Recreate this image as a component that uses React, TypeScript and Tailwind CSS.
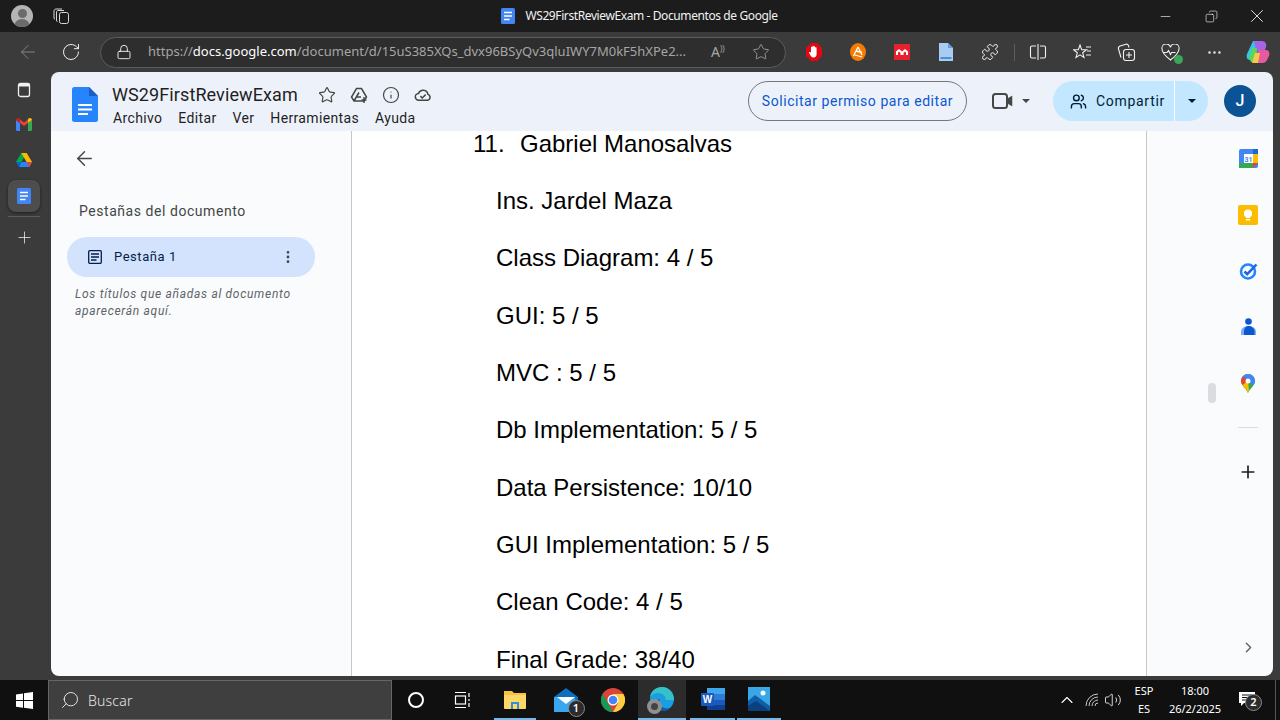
import React from 'react';
import { ArrowLeft, RotateCw, Lock, Star, Info, MoreVertical, ChevronRight, ChevronUp, Plus, Minus, X, Users, Search, Volume2, MoreHorizontal, Copy, Puzzle } from 'lucide-react';

const uiFont = "font-['Noto_Sans','Open_Sans',sans-serif]";

const lines = [
  'Ins. Jardel Maza',
  'Class Diagram: 4 / 5',
  'GUI: 5 / 5',
  'MVC : 5 / 5',
  'Db Implementation: 5 / 5',
  'Data Persistence: 10/10',
  'GUI Implementation: 5 / 5',
  'Clean Code: 4 / 5',
  'Final Grade: 38/40',
];

function DocsIcon({ size = 16 }: { size?: number }) {
  return (
    <svg width={size} height={size} viewBox="0 0 16 16">
      <rect x="1" y="0" width="14" height="16" rx="1.5" fill="#4285f4" />
      <path d="M4 4.5h8M4 8h8M4 11.5h5.5" stroke="#fff" strokeWidth="1.6" />
    </svg>
  );
}

function DocsLogo() {
  return (
    <svg width="26" height="35" viewBox="0 0 26 35">
      <path d="M2.5 0H17l9 9v23.5a2.500 2.500 0 0 1-2.500 2.500h-21A2.500 2.500 0 0 1 0 32.500v-30A2.500 2.500 0 0 1 2.500 0z" fill="#2684fc" />
      <path d="M17 0l9 9h-9z" fill="#1a5fc8" />
      <path d="M6 18h14M6 22.500h14M6 27h10" stroke="#fff" strokeWidth="2" />
    </svg>
  );
}

function Gmail() {
  return (
    <svg width="16" height="13" viewBox="0 0 16 13">
      <path d="M0 2v9.500A1.500 1.500 0 0 0 1.500 13H4V5z" fill="#4285f4" />
      <path d="M16 2v9.500a1.500 1.500 0 0 1-1.500 1.500H12V5z" fill="#34a853" />
      <path d="M4 5v-3.500L8 4.500l4-3V5L8 8z" fill="#ea4335" />
      <path d="M0 2c0-1.800 2.200-2.600 3.500-1.500L4 1v4L0 2z" fill="#c5221f" />
      <path d="M16 2c0-1.800-2.200-2.600-3.500-1.500L12 1v4l4-3z" fill="#fbbc04" />
    </svg>
  );
}

function Drive() {
  return (
    <svg width="16" height="14" viewBox="0 0 16 14">
      <path d="M5.300 0h5.400l-5.300 9H0z" fill="#00ac47" />
      <path d="M5.300 0h5.400L16 9h-5.400z" fill="#ffba00" />
      <path d="M3 14l2.400-5H16l-2.600 5z" fill="#2684fc" />
      <path d="M0 9h5.400L3 14z" fill="#0066da" />
      <path d="M10.600 9H16l-2.600 5z" fill="#ea4335" />
    </svg>
  );
}

function Calendar() {
  return (
    <svg width="19" height="19" viewBox="0 0 19 19">
      <rect width="19" height="19" rx="2" fill="#4285f4" />
      <rect x="14" y="0" width="5" height="5" fill="#1967d2" />
      <rect x="14" y="5" width="5" height="9" fill="#fbbc04" />
      <rect x="0" y="14" width="14" height="5" fill="#34a853" />
      <path d="M14 14h5l-5 5z" fill="#ea4335" />
      <rect x="5" y="5" width="9" height="9" fill="#fff" />
      <text x="9.500" y="12.500" textAnchor="middle" fontSize="7" fontWeight="700" fill="#4285f4" fontFamily="Roboto, sans-serif">31</text>
    </svg>
  );
}

function Keep() {
  return (
    <svg width="20" height="20" viewBox="0 0 20 20">
      <rect width="20" height="20" rx="2" fill="#fbbc04" />
      <circle cx="10" cy="8.500" r="4" fill="#fff" />
      <rect x="8" y="11" width="4" height="2" fill="#fff" />
      <rect x="8" y="14" width="4" height="1.500" fill="#fff" />
    </svg>
  );
}

function Tasks() {
  return (
    <svg width="19" height="18" viewBox="0 0 19 18">
      <circle cx="9" cy="9.500" r="7" fill="none" stroke="#2684fc" strokeWidth="2.600" />
      <path d="M5.500 9.500l2.700 2.700L17.500 2.500" fill="none" stroke="#1a66e0" strokeWidth="2.500" />
    </svg>
  );
}

function Contacts() {
  return (
    <svg width="15" height="17" viewBox="0 0 15 17">
      <circle cx="7.500" cy="3.500" r="3.300" fill="#0b57d0" />
      <path d="M0 14c0-3.500 3-6 7.500-6s7.500 2.500 7.500 6v3H0z" fill="#7baaf7" />
      <path d="M3 17v-4c0-3 2-5 4.500-5s6 2 6 5v4z" fill="#0b57d0" />
    </svg>
  );
}

function Maps() {
  return (
    <svg width="14" height="19" viewBox="0 0 14 19">
      <path d="M7 19C5.800 15.500 0 11.500 0 7a7 7 0 0 1 14 0c0 4.500-5.800 8.500-7 12z" fill="#34a853" />
      <path d="M2 2a7 7 0 0 0-2 5c0 1.500.6 2.800 1.500 4L7 7z" fill="#ea4335" />
      <path d="M2 2a7 7 0 0 1 5-2 7 7 0 0 1 5 2L7 7z" fill="#4285f4" />
      <path d="M12 2a7 7 0 0 1 2 5c0 1.500-.6 2.800-1.500 4L7 7z" fill="#4285f4" />
      <path d="M1.500 11C3 13.500 6 16 7 19l1-2.500L7 7z" fill="#fbbc04" />
      <circle cx="7" cy="7" r="2.500" fill="#fff" />
    </svg>
  );
}

function ExtensionIcons() {
  return (
    <>
      <Slot>
        <svg width="16" height="18" viewBox="0 0 16 18">
          <path d="M5 0h6l5 5v8l-5 5H5l-5-5V5z" fill="#e30613" />
          <path d="M5 9V4.500a.7.7 0 0 1 1.400 0V3.500a.7.7 0 0 1 1.400 0v.5a.7.7 0 0 1 1.400 0v1a.7.7 0 0 1 1.400 0V11c0 2-1 3.500-3 3.500-2.500 0-3-2-4.500-4.500-.5-1 .8-1.600 1.400-.5z" fill="#fff" />
        </svg>
      </Slot>
      <Slot>
        <svg width="16" height="18" viewBox="0 0 16 18">
          <ellipse cx="8" cy="9" rx="8" ry="9" fill="#f57c00" />
          <path d="M8 4l4 8M6 8l6 1.500M5 12l7 2M3.500 13L8 4" stroke="#fff" strokeWidth="1.300" fill="none" />
        </svg>
      </Slot>
      <Slot>
        <svg width="16" height="16" viewBox="0 0 16 16">
          <rect width="16" height="16" fill="#e8212e" />
          <path d="M2 11V7.500L5 5l3 2.500L11 5l3 2.500V11h-2V8.500L11 7.500 9.500 9v2h-3V9L5 7.500 4 8.500V11z" fill="#fff" />
        </svg>
      </Slot>
      <Slot>
        <svg width="14" height="18" viewBox="0 0 14 18">
          <path d="M0 0h9l5 5v13H0z" fill="#a9cdf2" />
          <path d="M9 0l5 5H9z" fill="#5f9fe0" />
          <rect x="1.500" y="14" width="11" height="2" fill="#4a90d9" />
        </svg>
      </Slot>
      <Slot><Puzzle size={18} strokeWidth={1.2} className="text-white" /></Slot>
    </>
  );
}

function Slot({ children }: { children: React.ReactNode }) {
  return <div className="flex w-11 shrink-0 items-center justify-center text-[#f0f0f0]">{children}</div>;
}

function TitleBar() {
  return (
    <div className={`grid h-8 shrink-0 grid-cols-[1fr_auto_1fr] items-center bg-[#1c1c1c] text-white ${uiFont}`}>
      <div className="flex items-center pl-[11px]">
        <div className="flex h-[22px] w-[22px] items-end justify-center overflow-hidden rounded-full bg-[#b5b5b5]">
          <div className="relative h-[18px] w-[16px]">
            <div className="mx-auto h-[9px] w-[9px] rounded-full bg-[#6b6b6b]" />
            <div className="mx-auto mt-[1px] h-[8px] w-[16px] rounded-t-full bg-[#6b6b6b]" />
          </div>
        </div>
        <svg className="ml-[20px]" width="17" height="17" viewBox="0 0 17 17" fill="none" stroke="#d8d8d8" strokeWidth="1">
          <rect x="6.500" y="4.500" width="9" height="11" rx="2" />
          <path d="M4.500 13.500l-1-.5V4c0-1 .8-1.500 1.500-1.500h6M2 11l-1-.5V3c0-1.200 1-2 2-2h6" />
        </svg>
      </div>
      <div className="flex items-center gap-[9px] pr-[2px] text-xs tracking-[-0.4px]">
        <DocsIcon />
        <span className="text-[#f2f2f2]">WS29FirstReviewExam - Documentos de Google</span>
      </div>
      <div className="flex items-center justify-end">
        <div className="flex w-[46px] justify-center"><Minus size={15} strokeWidth={1} /></div>
        <div className="flex w-[46px] justify-center"><Copy size={13} strokeWidth={1.1} className="-scale-x-100" /></div>
        <div className="flex w-[46px] justify-center"><X size={22} strokeWidth={0.9} /></div>
      </div>
    </div>
  );
}

function Toolbar() {
  return (
    <div className={`flex h-10 shrink-0 items-center bg-[#3b3b3b] ${uiFont}`}>
      <div className="flex w-[50px] justify-center pl-[6px] text-[#8a8a8a]"><ArrowLeft size={22} strokeWidth={1} /></div>
      <div className="flex w-[44px] justify-center text-white"><RotateCw size={20} strokeWidth={1.1} /></div>
      <div className="ml-[8px] flex h-[31px] w-[686px] shrink-0 items-center rounded-full border border-[#5c5c5c] bg-[#2e2e2e]">
        <Lock size={16} strokeWidth={1.3} className="ml-[15px] text-white" />
        <span className="ml-[16px] w-[545px] overflow-hidden whitespace-nowrap text-[13px] text-[#a6a6a6]">
          https://<span className="text-white">docs.google.com</span>/document/d/15uS385XQs_dvx96BSyQv3qluIWY7M0kF5hXPe2...
        </span>
        <span className="ml-[18px] flex w-[19px] items-start text-[14px] leading-[16px] text-[#a6a6a6]">A<span className="text-[8px] leading-[10px]">))</span></span>
        <Star size={18} strokeWidth={1.1} className="ml-[22px] text-[#a6a6a6]" />
      </div>
      <div className="ml-[6px] flex items-center">
        <ExtensionIcons />
        <div className="ml-[2px] mr-px h-[17px] w-px bg-[#5c5c5c]" />
        <Slot>
          <svg width="18" height="18" viewBox="0 0 18 18" fill="none" stroke="#f0f0f0" strokeWidth="1.100">
            <path d="M7 3H3a1.500 1.500 0 0 0-1.500 1.500v9A1.500 1.500 0 0 0 3 15h4M11 3h4a1.500 1.500 0 0 1 1.500 1.500v9A1.500 1.500 0 0 1 15 15h-4M9 1v16" />
          </svg>
        </Slot>
        <Slot>
          <svg width="19" height="18" viewBox="0 0 19 18" fill="none" stroke="#f0f0f0" strokeWidth="1.100">
            <path d="M7 2l1.700 4.600 4.800.2-3.800 3 1.300 4.700L7 11.800l-4 2.700 1.300-4.700L.5 6.800l4.800-.2zM13 4h5M14 8h4M13 12h5" />
          </svg>
        </Slot>
        <Slot>
          <svg width="19" height="19" viewBox="0 0 19 19" fill="none" stroke="#f0f0f0" strokeWidth="1.100">
            <path d="M4 14.500L1.500 6C1 4.500 2 3.500 3 3l6-1.800c1.200-.3 2 .3 2.500 1.300l.5 2" />
            <rect x="6.500" y="6.500" width="11" height="11" rx="2.500" />
            <path d="M12 9v6M9 12h6" />
          </svg>
        </Slot>
        <Slot>
          <div className="relative">
            <svg width="19" height="17" viewBox="0 0 19 17" fill="none" stroke="#f0f0f0" strokeWidth="1.100">
              <path d="M9.500 16C3 11 1 8 1 5a4 4 0 0 1 8.500-1.500A4 4 0 0 1 18 5c0 3-2 6-8.500 11zM2 8.500h4l1.500-2 2 4 1-2h4" />
            </svg>
            <div className="absolute -bottom-[3px] -right-[3px] h-[9px] w-[9px] rounded-full bg-[#3ba55c]" />
          </div>
        </Slot>
        <Slot><MoreHorizontal size={17} strokeWidth={1.5} /></Slot>
        <Slot>
          <svg width="24" height="24" viewBox="0 0 24 24">
            <path d="M7 1h7l-5 19H4C1 20 0 17 1 14z" fill="#34c4e8" />
            <path d="M8 1h8c3 0 5 3 4 6l-1 3h-9z" fill="#a864e8" />
            <path d="M3 18l3-10h5l-3 14H5z" fill="#5ad65a" />
            <path d="M8 23l4-13h8c3 0 4 3 3 6l-1 2c-1 3-3 5-6 5z" fill="#e85aa0" />
            <path d="M6 23l3-10h5l-2 10z" fill="#f7c948" />
          </svg>
        </Slot>
      </div>
    </div>
  );
}

function Rail() {
  return (
    <div className="flex w-[51px] shrink-0 flex-col items-center bg-[#3b3b3b] pr-[3px] pt-[10px]">
      <svg width="16" height="16" viewBox="0 0 16 16" fill="none" stroke="#f0f0f0" strokeWidth="1.300">
        <rect x="2.500" y="1.500" width="11" height="13" rx="2" />
        <rect x="2.500" y="1.500" width="11" height="3" fill="#f0f0f0" strokeWidth="0" />
      </svg>
      <div className="mt-[20px]"><Gmail /></div>
      <div className="mt-[22px]"><Drive /></div>
      <div className="mt-[13px] flex h-8 w-8 items-center justify-center rounded-lg bg-[#4d4d4d] shadow-[0_1px_3px_rgba(0,0,0,0.5)]">
        <DocsIcon />
      </div>
      <div className="mt-[4px] h-px w-8 bg-[#5c5c5c]" />
      <Plus size={19} strokeWidth={0.9} className="mt-[11px] text-white" />
    </div>
  );
}

function DocHeader() {
  return (
    <div className="flex h-[59px] shrink-0 items-center bg-[#edf2fa] pl-[21px] pr-[17px] font-['Roboto',sans-serif]">
      <div className="mt-[6px]"><DocsLogo /></div>
      <div className="ml-[14px] mt-[8px] flex flex-col">
        <div className="flex items-center">
          <span className="w-[206px] text-[18px] leading-[24px] tracking-[0.1px] text-[#1f1f1f]">WS29FirstReviewExam</span>
          <div className="flex items-center gap-[14px] text-[#444746]">
            <Star size={18} strokeWidth={1.6} />
            <svg width="18" height="17" viewBox="0 0 18 17" fill="none" stroke="#444746" strokeWidth="1.500">
              <path d="M6.500 1.500h5l5 8.500-2.500 4H4L1.500 10zM4 14L9 5.500M11 10H6" />
              <path d="M14 10v6M11.500 13h5" />
            </svg>
            <Info size={18} strokeWidth={1.6} />
            <svg width="18" height="18" viewBox="0 0 24 24" fill="none" stroke="#444746" strokeWidth="2">
              <path d="M6.500 19a4.500 4.500 0 0 1-.5-9 6.500 6.500 0 0 1 12.500 1.200A4 4 0 0 1 18 19z" />
              <path d="M8.500 13.500l2.500 2.500 4.500-4.500" />
            </svg>
          </div>
        </div>
        <div className="mt-[1px] flex gap-4 pl-[1px] text-[14px] leading-[20px] tracking-[0.35px] text-[#1f1f1f]">
          <span>Archivo</span>
          <span>Editar</span>
          <span>Ver</span>
          <span>Herramientas</span>
          <span>Ayuda</span>
        </div>
      </div>
      <div className="ml-auto mt-[-1px] flex items-center">
        <div className="flex h-10 w-[219px] items-center justify-center rounded-full border border-[#747775] text-[14px] tracking-[0.55px] text-[#0b57d0]">
          Solicitar permiso para editar
        </div>
        <div className="ml-[25px] flex items-center text-[#444746]">
          <svg width="21" height="16" viewBox="0 0 21 16" fill="none" stroke="#444746" strokeWidth="2">
            <rect x="1" y="1" width="14" height="14" rx="2.500" />
            <path d="M15 6l5-3v10l-5-3z" fill="#444746" strokeWidth="0.500" />
          </svg>
          <div className="ml-[9px] h-0 w-0 border-x-[4px] border-t-[4px] border-x-transparent border-t-[#444746]" />
        </div>
        <div className="ml-[23px] flex h-10 w-[155px] overflow-hidden rounded-full bg-[#c2e7ff] text-[#001d35]">
          <div className="flex w-[122px] items-center border-r border-white pl-[17px]">
            <Users size={17} strokeWidth={2} />
            <span className="ml-[9px] text-[14px] tracking-[0.7px]">Compartir</span>
          </div>
          <div className="flex flex-1 items-center justify-center">
            <div className="h-0 w-0 border-x-[4px] border-t-[4px] border-x-transparent border-t-[#001d35]" />
          </div>
        </div>
        <div className="ml-[16px] flex h-8 w-8 items-center justify-center rounded-full bg-[#0b5394] text-[16px] font-medium text-white">J</div>
      </div>
    </div>
  );
}

function TabsPanel() {
  return (
    <div className="w-[301px] shrink-0 border-r border-[#c7c7c7] bg-[#f9fbfd] font-['Roboto',sans-serif]">
      <ArrowLeft size={23} strokeWidth={1.5} className="ml-[22px] mt-[16px] text-[#444746]" />
      <div className="ml-[28px] mt-[31px] text-[14px] leading-[20px] tracking-[0.55px] text-[#444746]">Pestañas del documento</div>
      <div className="ml-4 mt-4 flex h-10 w-[248px] items-center rounded-full bg-[#d3e3fd] pl-[21px] pr-[20px] text-[#041e49]">
        <svg width="14" height="14" viewBox="0 0 14 14" fill="none" stroke="#041e49" strokeWidth="1.300">
          <rect x="0.700" y="0.700" width="12.600" height="12.600" rx="1" />
          <path d="M3 4h8M3 7h8M3 10h5.500" />
        </svg>
        <span className="ml-[12px] text-[13px] tracking-[0.55px]">Pestaña 1</span>
        <MoreVertical size={16} strokeWidth={2.2} className="ml-auto -mr-[1px] text-[#444746]" />
      </div>
      <div className="ml-[24px] mt-[9px] whitespace-nowrap text-[12px] italic leading-[17px] tracking-[0.7px] text-[#5f6368]">
        Los títulos que añadas al documento<br />aparecerán aquí.
      </div>
    </div>
  );
}

function DocumentPage() {
  return (
    <div className="relative min-w-0 flex-1 overflow-hidden bg-white font-['Liberation_Sans',Arial,sans-serif] text-[24px] leading-[57.33px] text-black">
      <div className="-mt-[16.2px] whitespace-nowrap pl-[144px]">
        <div className="-ml-[23px] flex">
          <span className="w-[47px]">11.</span>
          <span>Gabriel Manosalvas</span>
        </div>
        {lines.map((line) => <div key={line}>{line}</div>)}
      </div>
    </div>
  );
}

function SidePanel() {
  return (
    <div className="relative flex w-[127px] shrink-0 flex-col items-center border-l border-[#c7c7c7] bg-[#f9fbfd] pl-[76px]">
      <div className="absolute left-[61px] top-[252px] h-5 w-2 rounded-full bg-[#dadce0]" />
      <div className="mt-[18px]"><Calendar /></div>
      <div className="mt-[37px]"><Keep /></div>
      <div className="mt-[37px]"><Tasks /></div>
      <div className="mt-[38px]"><Contacts /></div>
      <div className="mt-[39px]"><Maps /></div>
      <div className="mt-[34px] h-px w-5 bg-[#dadce0]" />
      <Plus size={20} strokeWidth={2} className="mt-[34px] text-[#1f1f1f]" />
      <ChevronRight size={17} strokeWidth={2} className="mb-[20px] mt-auto text-[#5f6368]" />
    </div>
  );
}

function TaskButton({ className, children }: { className: string; children: React.ReactNode }) {
  return <div className={`relative flex h-10 shrink-0 items-center justify-center ${className}`}>{children}</div>;
}

function Badge({ n }: { n: number }) {
  return (
    <div className="absolute -bottom-[5px] -right-[7px] flex h-[17px] w-[17px] items-center justify-center rounded-full border border-[#8a8a8a] bg-[#2c2c2c] text-[11px] font-semibold text-white">{n}</div>
  );
}

function Taskbar() {
  return (
    <div className={`mt-1 flex h-10 shrink-0 items-center bg-[#101010] text-white ${uiFont}`}>
      <div className="flex w-12 justify-center">
        <svg width="17" height="17" viewBox="0 0 17 17" fill="#fff">
          <path d="M0 2.400l7-1v6.700H0zM8 1.300L17 0v8.100H8zM0 9h7v6.700l-7-1zM8 9h9v8l-9-1.300z" />
        </svg>
      </div>
      <div className="flex h-10 w-[344px] items-center border border-[#666] bg-[#3f3f3f]">
        <Search size={20} strokeWidth={1} className="ml-[11px] -scale-x-100 text-white" />
        <span className="ml-[8px] text-[14px] font-light tracking-[0.2px] text-[#e8e8e8]">Buscar</span>
      </div>
      <div className="flex w-[48px] justify-center">
        <div className="h-[16px] w-[16px] rounded-full border-2 border-white" />
      </div>
      <div className="flex w-[46px] justify-center">
        <svg width="18" height="18" viewBox="0 0 18 18" fill="none" stroke="#fff" strokeWidth="1.200">
          <path d="M1 1.500h11M1 16.500h11" />
          <rect x="1.500" y="5" width="10" height="8" />
          <path d="M15 2v4M15 8v2M15 12v4" />
        </svg>
      </div>
      <div className="ml-[8px] flex items-center">
        <TaskButton className="w-[42px] border-b-2 border-[#76b9ed]">
          <svg width="22" height="21" viewBox="0 0 22 21">
            <path d="M0 2h8l2 2h12v15H0z" fill="#f5c242" />
            <path d="M0 6h22v13a1 1 0 0 1-1 1H1a1 1 0 0 1-1-1z" fill="#ffd766" />
            <rect x="7" y="13" width="8" height="7" fill="#2f8fd8" />
            <rect x="9" y="15" width="4" height="5" fill="#ffd766" />
          </svg>
        </TaskButton>
        <TaskButton className="ml-[6px] w-[47px]">
          <div className="relative">
            <svg width="24" height="24" viewBox="0 0 24 24">
              <path d="M12 0l12 9v15H0V9z" fill="#0e6fc0" />
              <path d="M3 9h18v15H0V9z" fill="#38a7ef" />
              <path d="M3 9h18l-9 7z" fill="#fff" />
            </svg>
            <Badge n={1} />
          </div>
        </TaskButton>
        <TaskButton className="w-[47px]">
          <svg width="24" height="24" viewBox="0 0 24 24">
            <circle cx="12" cy="12" r="12" fill="#db4437" />
            <path d="M12 24A12 12 0 0 1 1.600 6l5.200 9 5.200 9z" fill="#0f9d58" />
            <path d="M12 24l5.200-9L12 6h10.400A12 12 0 0 1 12 24z" fill="#ffcd40" />
            <circle cx="12" cy="12" r="5.500" fill="#fff" />
            <circle cx="12" cy="12" r="4.300" fill="#4285f4" />
          </svg>
        </TaskButton>
        <TaskButton className="ml-[2px] w-[48px] border-b-2 border-[#76b9ed] bg-[#2c2c2c]">
          <div className="relative">
            <svg width="24" height="24" viewBox="0 0 24 24">
              <circle cx="12" cy="12" r="12" fill="#1b9de2" />
              <path d="M24 13c0-7-5-13-12-13C6 0 1 4 0 10c3-4 8-5 12-3 3 1.500 4 4 3.500 6H20c2 0 4 1 4 0z" fill="#35c1c8" />
              <path d="M3 18c2 4 6 6 9 6 3 0 6-1 8-3-4 1-8 0-10-3-1-2-1-4 0-6-3 0-6 3-7 6z" fill="#0c59a4" />
            </svg>
            <div className="absolute -bottom-[3px] -left-[3px] flex h-[15px] w-[15px] items-center justify-center rounded-full bg-[#8f8f8f]">
              <div className="h-[7px] w-[7px] rounded-full bg-[#444]" />
            </div>
          </div>
        </TaskButton>
        <TaskButton className="ml-[4px] w-[45px] border-b-2 border-[#76b9ed]">
          <svg width="24" height="24" viewBox="0 0 24 24">
            <rect x="6" y="1" width="18" height="22" rx="1.500" fill="#2b7cd3" />
            <rect x="6" y="1" width="18" height="6" fill="#41a5ee" />
            <rect x="6" y="13" width="18" height="5" fill="#185abd" />
            <rect x="6" y="18" width="18" height="5" fill="#103f91" />
            <rect x="0" y="6" width="13" height="13" rx="1" fill="#185abd" />
            <text x="6.500" y="16" textAnchor="middle" fontSize="10" fontWeight="700" fill="#fff" fontFamily="Liberation Sans, sans-serif">W</text>
          </svg>
        </TaskButton>
        <TaskButton className="ml-[2px] w-[44px] border-b-2 border-[#76b9ed]">
          <svg width="22" height="24" viewBox="0 0 22 24">
            <rect width="22" height="24" fill="#39a7e5" />
            <path d="M0 24V14l7-6 15 11v5z" fill="#0f5ea8" />
            <path d="M0 24v-5l8-5 14 10z" fill="#0b3f80" />
            <circle cx="15" cy="6" r="2.500" fill="#fff" />
          </svg>
        </TaskButton>
      </div>
      <div className="ml-auto flex h-full items-center">
        <ChevronUp size={20} strokeWidth={1.3} />
        <svg className="ml-[8px]" width="15" height="14" viewBox="0 0 15 14" fill="none" stroke="#c8c8c8" strokeWidth="1">
          <path d="M1 13A12 12 0 0 1 13 1M4 13a9 9 0 0 1 9-9M7 13a6 6 0 0 1 6-6M10 13a3 3 0 0 1 3-3" />
        </svg>
        <Volume2 size={18} strokeWidth={1.1} className="ml-[4px]" />
        <div className="ml-[1px] flex w-[42px] flex-col items-center text-[11px] leading-[18px]">
          <span>ESP</span>
          <span>ES</span>
        </div>
        <div className="flex w-[60px] flex-col items-center text-[11px] leading-[18px]">
          <span>18:00</span>
          <span>26/2/2025</span>
        </div>
        <div className="relative -mt-[3px] ml-[14px]">
          <svg width="16" height="14" viewBox="0 0 16 14" className="block">
            <path d="M0 0h16v11H5l-3 3v-3H0z" fill="#fff" />
            <path d="M3 3h10M3 5.500h10M3 8h6" stroke="#101010" strokeWidth="1" />
          </svg>
          <Badge n={2} />
        </div>
        <div className="ml-[20px] mr-[4px] h-full w-px bg-[#555]" />
      </div>
    </div>
  );
}

export default function App() {
  return (
    <div className="flex h-screen w-[1280px] flex-col overflow-hidden bg-[#3b3b3b]">
      <TitleBar />
      <Toolbar />
      <div className="flex min-h-0 flex-1">
        <Rail />
        <div className="flex min-w-0 flex-1 flex-col overflow-hidden rounded-[8px]">
          <DocHeader />
          <div className="flex min-h-0 flex-1">
            <TabsPanel />
            <DocumentPage />
            <SidePanel />
          </div>
        </div>
        <div className="w-[7px] shrink-0" />
      </div>
      <Taskbar />
    </div>
  );
}
